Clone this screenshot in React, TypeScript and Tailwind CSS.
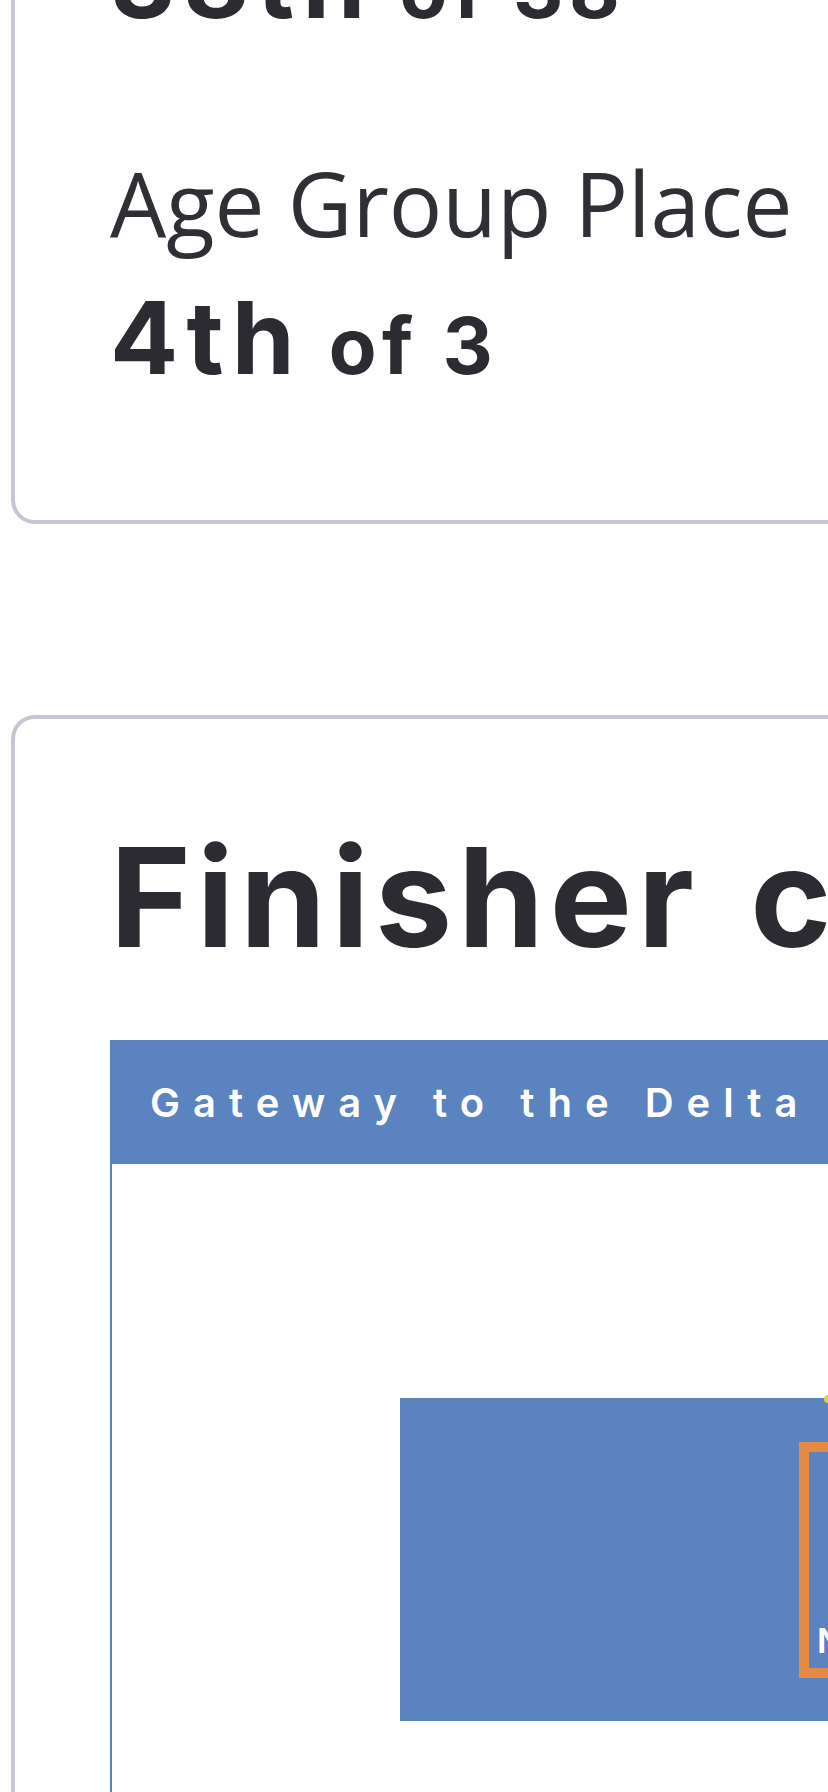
const heading = { fontFamily: 'Inter, "Liberation Sans", sans-serif' }
const body = { fontFamily: '"Open Sans", "Liberation Sans", sans-serif' }

function Stat({ label, value, total, first }: { label?: string; value: string; total: string; first?: boolean }) {
  return (
    <div className={first ? '' : 'mt-[113px]'}>
      {label && (
        <div
          style={body}
          className="text-[89px] leading-[107px] text-[#2f2f35] whitespace-nowrap"
        >
          {label}
        </div>
      )}
      <div
        style={heading}
        className={`${label ? 'mt-[26px]' : ''} h-[110px] leading-[110px] font-bold text-[#2b2b31] whitespace-nowrap`}
      >
        <span className="text-[101px] tracking-[0.08em]">{value}</span>
        <span className="text-[78px] ml-[26px] tracking-[0.07em]">of {total}</span>
      </div>
    </div>
  )
}

export default function App() {
  return (
    <div className="w-[828px] h-[1792px] overflow-hidden bg-white">
      {/* Placement card (scrolled past the top) */}
      <div className="-mt-[178px] ml-[11px] w-[1200px] border-[4px] border-[#c6c6d3] rounded-[24px] pt-[100px] pb-[128px] pl-[95px]">
        <Stat value="38th" total="38" first />
        <Stat label="Age Group Place" value="4th" total="3" />
      </div>

      {/* Finisher certificate card */}
      <div className="mt-[191px] ml-[11px] w-[1200px] h-[1200px] border-[4px] border-[#c6c6d3] rounded-[24px] pt-[102px] pl-[95px]">
        <h2
          style={heading}
          className="text-[138px] leading-[152px] font-bold text-[#2b2b31] whitespace-nowrap tracking-[0.042em] [word-spacing:12px]"
        >
          Finisher certificate
        </h2>

        <div className="mt-[67px] w-[1000px] h-[900px] border-2 border-[#5b83bf]">
          <div className="h-[122px] bg-[#5b83bf] flex items-center pl-[38px]">
            <span
              style={heading}
              className="text-[40px] font-semibold text-white tracking-[13px] whitespace-nowrap"
            >
              Gateway to the Delta
            </span>
          </div>

          <div className="relative mt-[234px] ml-[288px] w-[800px] h-[323px] bg-[#5b83bf]">
            <div className="absolute left-[424px] -top-[3px] w-[10px] h-[8px] rounded-full bg-[#e9c85a]" />
            <div className="relative ml-[399px] mt-[44px] inline-block w-[300px] h-[236px] border-[10px] border-[#e48a42] align-top">
              <span
                style={heading}
                className="absolute left-[8px] bottom-[2px] text-[34px] font-semibold text-white whitespace-nowrap"
              >
                Name
              </span>
            </div>
          </div>
        </div>
      </div>
    </div>
  )
}
